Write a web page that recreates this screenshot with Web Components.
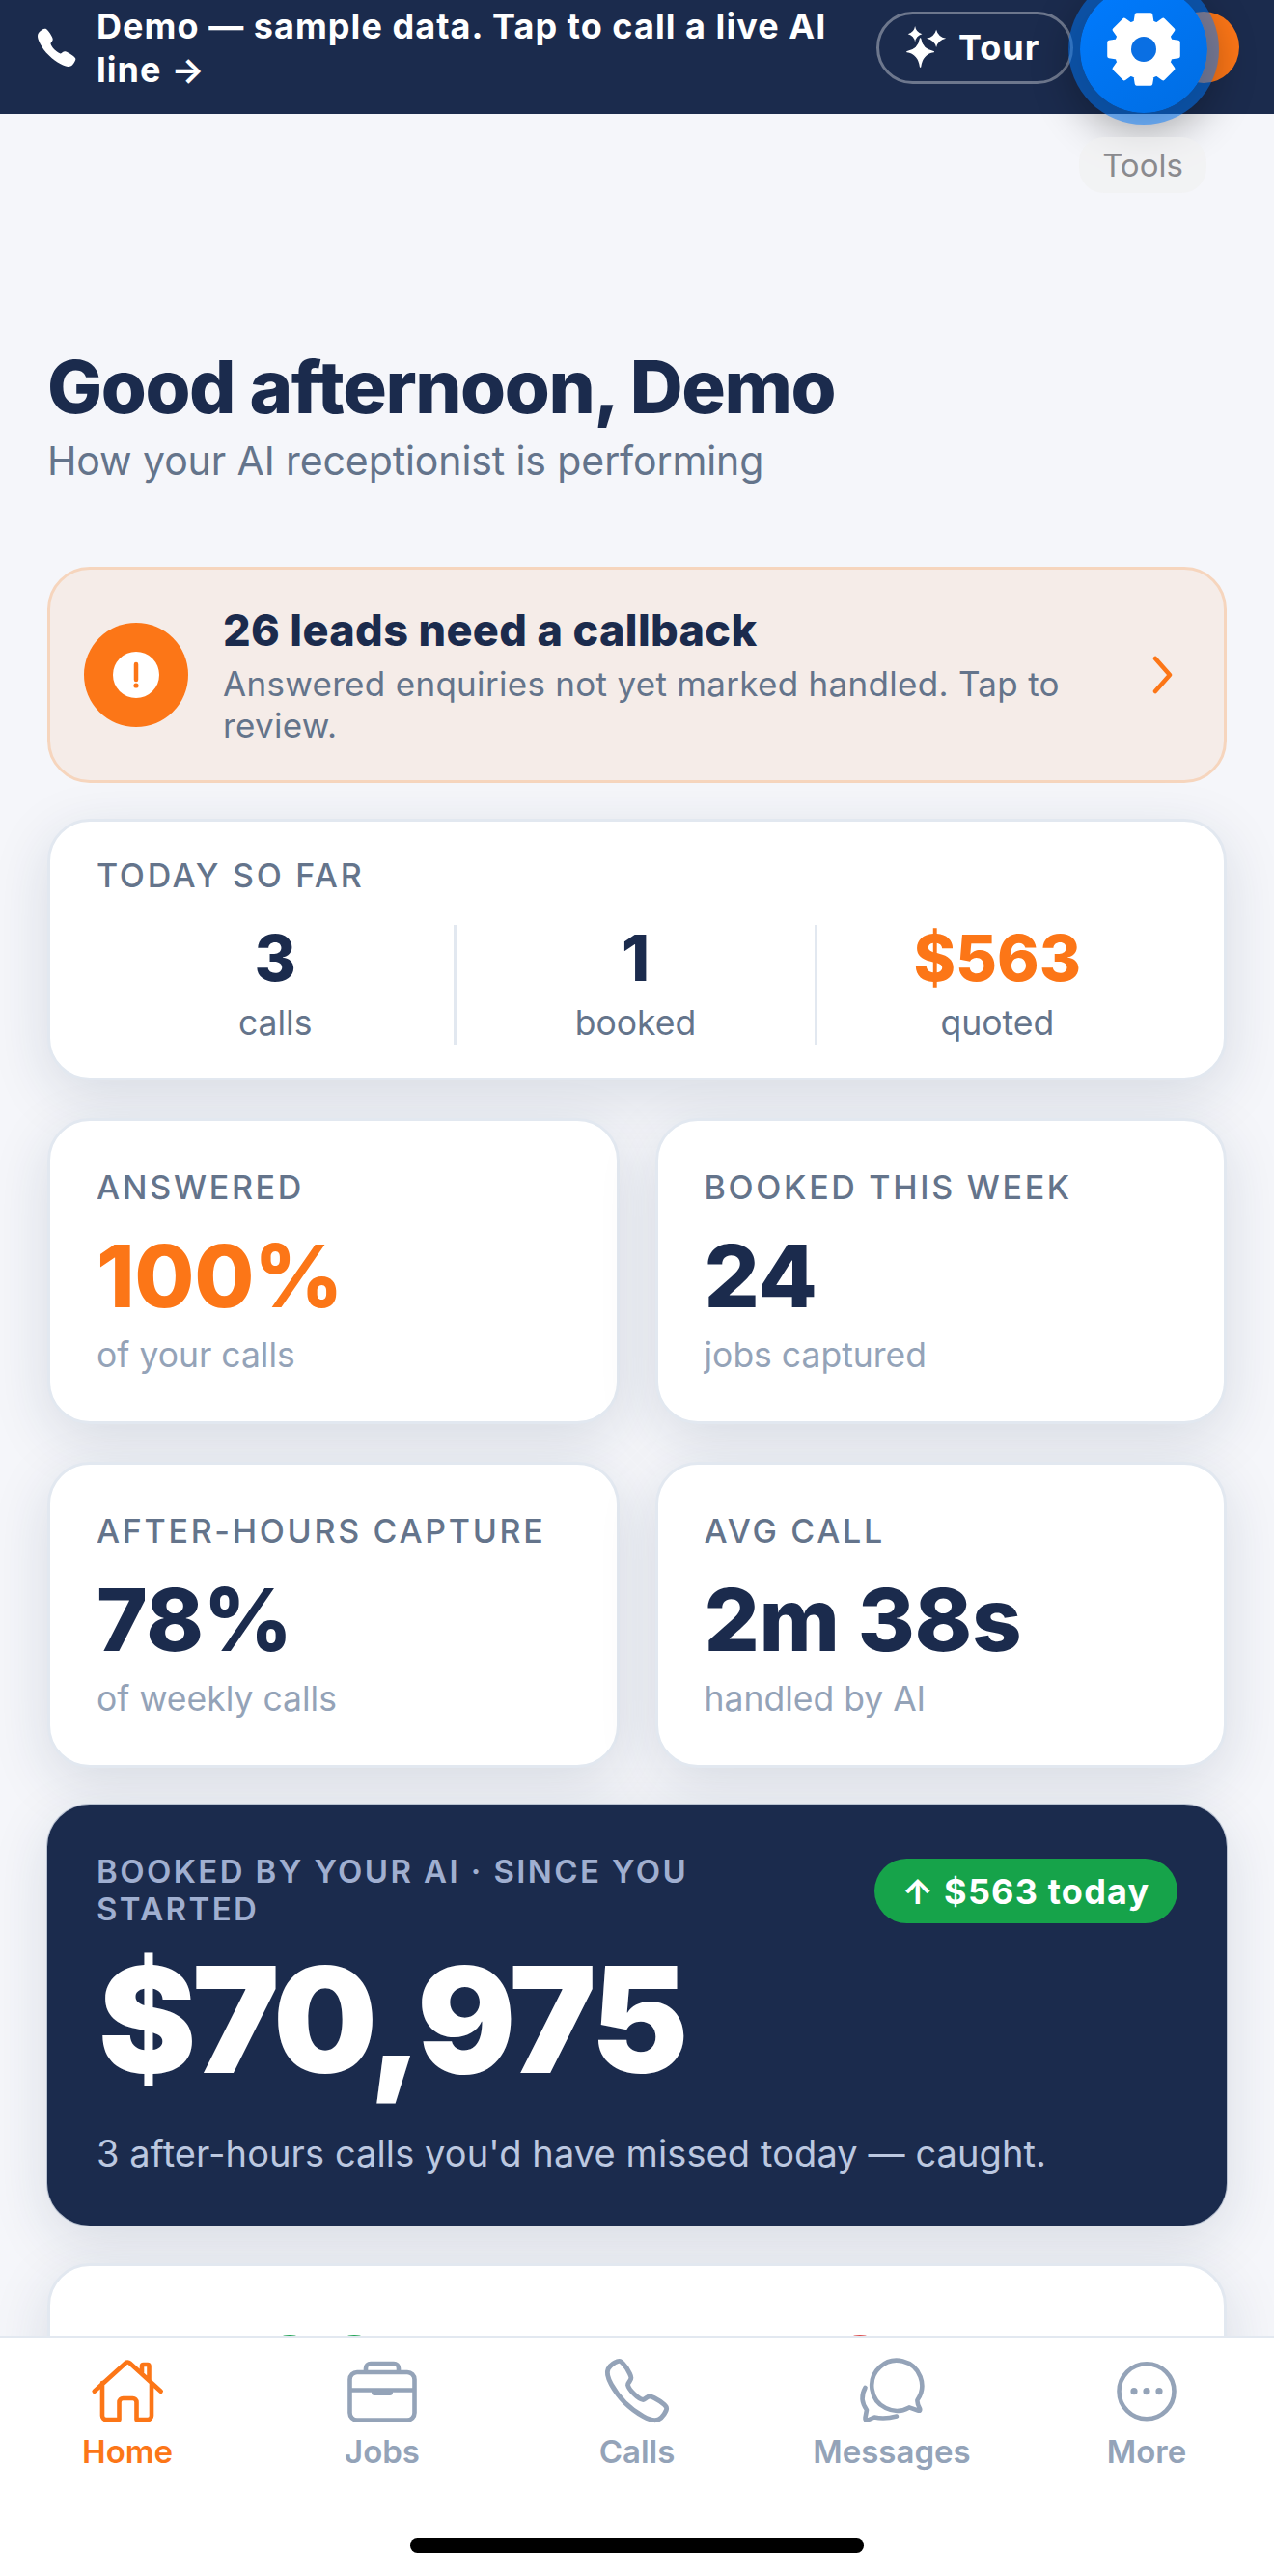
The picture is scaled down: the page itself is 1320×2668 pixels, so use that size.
<!DOCTYPE html>
<html lang="en">
<head>
<meta charset="UTF-8">
<title>Dashboard</title>
<style>
  html, body { margin: 0; padding: 0; }
  body { font-family: Inter, "Liberation Sans", sans-serif; background: #f5f6fa; font-optical-sizing: none; }
</style>
</head>
<body>
<app-shell>
  <demo-banner slot="banner">Demo — sample data. Tap to call a live AI line →</demo-banner>
  <greeting-head title-text="Good afternoon, Demo">How your AI receptionist is performing</greeting-head>
  <alert-card title-text="26 leads need a callback">Answered enquiries not yet marked handled. Tap to review.</alert-card>
  <today-card></today-card>
  <stat-grid>
    <stat-tile label="ANSWERED" value="100%" sub="of your calls" accent></stat-tile>
    <stat-tile label="BOOKED THIS WEEK" value="24" sub="jobs captured"></stat-tile>
    <stat-tile label="AFTER-HOURS CAPTURE" value="78%" sub="of weekly calls"></stat-tile>
    <stat-tile label="AVG CALL" value="2m 38s" sub="handled by AI"></stat-tile>
  </stat-grid>
  <revenue-card></revenue-card>
  <peek-card></peek-card>
  <tab-bar slot="nav"></tab-bar>
  <tools-fab slot="overlay"></tools-fab>
</app-shell>

<script>
  const PHONE = 'M391 480c-19.52 0-46.94-7.06-88-30-49.93-28-88.55-53.85-138.21-103.38C116.91 298.77 93.61 267.79 61 208.45c-36.84-67-30.56-102.12-23.54-117.13C45.82 73.38 58.35 62.65 74.55 51.83A176.3 176.3 0 01103.2 36.64c1-.43 1.93-.84 2.76-1.21 4.95-2.23 12.45-5.6 21.95-2 6.34 2.38 12 7.25 20.86 16 18.17 17.92 43 57.83 52.16 77.43 6.15 13.21 10.22 21.93 10.23 31.71 0 11.45-5.76 20.28-12.75 29.81-1.31 1.79-2.61 3.5-3.87 5.16-7.61 10-9.28 12.89-8.18 18.05 2.23 10.37 18.86 41.24 46.19 68.51s57.31 42.85 67.72 45.07c5.38 1.15 8.33-.59 18.65-8.47 1.48-1.13 3-2.3 4.59-3.47 10.66-7.93 19.08-13.54 30.26-13.54h.06c9.73 0 18.06 4.22 31.86 11.18 18 9.08 59.11 33.59 77.14 51.78 8.77 8.84 13.66 14.48 16.05 20.81 3.6 9.53.21 17-2 22-.37.83-.78 1.74-1.21 2.75a176.49 176.49 0 01-15.29 28.58c-10.8 16.14-21.58 28.64-39.56 37-9.23 4.37-20.33 6.56-30.99 6.56z';

  // every card shares this box
  const CARD_CSS = `
    box-sizing: border-box;
    display: block;
    background: #fff;
    border: 3px solid #e2e8f0;
    border-radius: 44px;
    box-shadow: 0 16px 60px rgba(27, 43, 77, .13);
  `;

  class Base extends HTMLElement {
    render(html) {
      this.attachShadow({ mode: 'open' }).innerHTML = html;
    }
  }

  customElements.define('app-shell', class extends Base {
    constructor() {
      super();
      this.render(`
        <style>
          :host { display: flex; flex-direction: column; position: relative; height: 2668px; overflow: hidden; background: #f5f6fa; }
          main { flex: 1; min-height: 0; overflow: hidden; display: flex; flex-direction: column; gap: 39px; padding: 240px 49px 0; }
        </style>
        <slot name="banner"></slot>
        <main><slot></slot></main>
        <slot name="nav"></slot>
        <slot name="overlay"></slot>
      `);
    }
  });

  customElements.define('demo-banner', class extends Base {
    constructor() {
      super();
      this.render(`
        <style>
          :host { display: flex; flex: none; align-items: center; box-sizing: border-box; height: 118px; padding: 0 36px 20px 39px; background: #1b2b4d; color: #fff; }
          .ph { flex: none; width: 40px; height: 40px; margin-right: 21px; }
          .txt { flex: 1; font-size: 36px; font-weight: 700; letter-spacing: 1.05px; line-height: 45px; padding-top: 2px; }
          .tour { flex: none; box-sizing: border-box; width: 204px; height: 75px; border: 3px solid rgba(255,255,255,.36); border-radius: 38px; display: flex; align-items: center; padding-left: 27px; font-size: 36px; font-weight: 700; letter-spacing: 1px; }
          .tour svg { width: 44px; height: 44px; margin-right: 11px; flex: none; }
          .avatar { flex: none; width: 74px; height: 74px; border-radius: 50%; background: #fc7617; margin-left: 98px; }
        </style>
        <svg class="ph" viewBox="32 24 456 456" fill="#fff"><path d="${PHONE}"/></svg>
        <div class="txt"><slot></slot></div>
        <div class="tour">
          <svg viewBox="0 0 48 48" fill="#fff">
            <path d="M17 14 Q19 27 32 29 Q19 31 17 46 Q15 31 2 29 Q15 27 17 14Z" stroke="#fff" stroke-width="1.5" stroke-linejoin="round"/>
            <path d="M11 0 Q12 7 19 9 Q12 11 11 18 Q10 11 3 9 Q10 7 11 0Z"/>
            <path d="M35 4 Q37 12 46 14 Q37 16 35 24 Q33 16 24 14 Q33 12 35 4Z"/>
          </svg>
          Tour
        </div>
        <div class="avatar"></div>
      `);
    }
  });

  customElements.define('tools-fab', class extends Base {
    constructor() {
      super();
      // 8 tooth gear, worked out from polar points
      let d = '';
      for (let i = 0; i < 8; i++) {
        const a = i * Math.PI / 4 - Math.PI / 2;
        const pts = [[29, -.3], [36.5, -.2], [36.5, .2], [29, .3]];
        pts.forEach(([r, o]) => {
          const x = 40 + r * Math.cos(a + o);
          const y = 40 + r * Math.sin(a + o);
          d += (d ? 'L' : 'M') + x.toFixed(2) + ' ' + y.toFixed(2);
        });
      }
      this.render(`
        <style>
          :host { display: block; position: absolute; left: 1119px; top: -15px; width: 132px; height: 215px; }
          .btn { width: 132px; height: 132px; border-radius: 50%; display: flex; align-items: center; justify-content: center;
                 background: linear-gradient(145deg, #007bff, #006de2);
                 box-shadow: 0 0 0 12px rgba(0,122,255,.5), 0 14px 44px 8px rgba(0,0,0,.3); }
          .btn svg { width: 80px; height: 80px; }
          .tip { position: absolute; left: -1px; top: 157px; width: 132px; height: 58px; border-radius: 26px; background: rgba(240,240,240,.62);
                 display: flex; align-items: center; justify-content: center; font-size: 33px; color: #8a8a8e; }
        </style>
        <div class="btn">
          <svg viewBox="0 0 80 80">
            <path d="${d}Z" fill="#fff" stroke="#fff" stroke-width="4" stroke-linejoin="round"/>
            <circle cx="40" cy="40" r="13" fill="#0a6fe3"/>
          </svg>
        </div>
        <div class="tip">Tools</div>
      `);
    }
  });

  customElements.define('greeting-head', class extends Base {
    constructor() {
      super();
      this.render(`
        <style>
          :host { display: block; flex: none; margin-bottom: 45px; }
          h1 { margin: 0 0 9px; font-size: 76px; line-height: 84px; font-weight: 800; letter-spacing: -1.4px; color: #1b2b4d; }
          p { margin: 0; font-size: 41px; line-height: 52px; letter-spacing: -.1px; color: #64748b; }
        </style>
        <h1>${this.getAttribute('title-text')}</h1>
        <p><slot></slot></p>
      `);
    }
  });

  customElements.define('alert-card', class extends Base {
    constructor() {
      super();
      this.render(`
        <style>
          :host { display: flex; flex: none; align-items: center; box-sizing: border-box; padding: 34px 34px 34px 35px; height: 224px; margin-bottom: -2px;
                  background: #f5ece8; border: 3px solid #f6d5bd; border-radius: 44px; }
          .ic { flex: none; width: 108px; height: 108px; border-radius: 50%; background: #fc7617; display: flex; align-items: center; justify-content: center; margin-right: 36px; }
          .ic svg { width: 48px; height: 48px; }
          .body { flex: 1; }
          .t { font-size: 45px; line-height: 56px; font-weight: 800; letter-spacing: .35px; color: #1b2b4d; }
          .d { margin-top: 6px; font-size: 35px; line-height: 43px; letter-spacing: .3px; color: #64748b; }
          .ch { flex: none; width: 28px; height: 40px; margin-left: 49px; margin-right: 16px; }
        </style>
        <div class="ic">
          <svg viewBox="0 0 48 48">
            <circle cx="24" cy="24" r="24" fill="#fff"/>
            <path d="M24 13V29" stroke="#fc7617" stroke-width="4.5" stroke-linecap="round"/>
            <circle cx="24" cy="35" r="2.6" fill="#fc7617"/>
          </svg>
        </div>
        <div class="body">
          <div class="t">${this.getAttribute('title-text')}</div>
          <div class="d"><slot></slot></div>
        </div>
        <svg class="ch" viewBox="0 0 28 40" fill="none" stroke="#fc7617" stroke-width="4.5" stroke-linecap="round" stroke-linejoin="round"><path d="M7 3L22 20L7 37"/></svg>
      `);
    }
  });

  customElements.define('today-card', class extends Base {
    constructor() {
      super();
      const cells = [['3', 'calls', ''], ['1', 'booked', ''], ['$563', 'quoted', 'o']];
      this.render(`
        <style>
          :host { ${CARD_CSS} flex: none; padding: 35px 48px 42px; height: 271px; }
          .lb { font-size: 34px; line-height: 42px; font-weight: 500; letter-spacing: 2.7px; color: #64748b; }
          .row { display: grid; grid-template-columns: repeat(3, 1fr); margin-top: 30px; height: 115px; }
          .cell { text-align: center; border-right: 3px solid #e2e8f0; }
          .cell:last-child { border-right: 0; }
          .n { font-size: 66px; line-height: 68px; font-weight: 800; color: #1b2b4d; }
          .n.o { color: #fc7617; }
          .s { margin-top: 12px; font-size: 35.5px; line-height: 44px; color: #64748b; }
        </style>
        <div class="lb">TODAY SO FAR</div>
        <div class="row">
          ${cells.map(c => `<div class="cell"><div class="n ${c[2]}">${c[0]}</div><div class="s">${c[1]}</div></div>`).join('')}
        </div>
      `);
    }
  });

  customElements.define('stat-grid', class extends Base {
    constructor() {
      super();
      this.render(`
        <style>:host { display: grid; flex: none; grid-template-columns: 1fr 1fr; column-gap: 37px; row-gap: 39px; margin-bottom: -1px; }</style>
        <slot></slot>
      `);
    }
  });

  customElements.define('stat-tile', class extends Base {
    constructor() {
      super();
      this.render(`
        <style>
          :host { ${CARD_CSS} padding: 48px 48px 0; height: 317px; }
          .lb { font-size: 34px; line-height: 42px; font-weight: 500; letter-spacing: 2.7px; color: #64748b; white-space: nowrap; }
          .v { margin-top: 25px; font-size: 90px; line-height: 92px; font-weight: 800; letter-spacing: -.4px; color: #1b2b4d; white-space: nowrap; }
          :host([accent]) .v { color: #fc7617; }
          .s { margin-top: 14px; font-size: 35.5px; line-height: 44px; color: #94a3b8; }
        </style>
        <div class="lb">${this.getAttribute('label')}</div>
        <div class="v">${this.getAttribute('value')}</div>
        <div class="s">${this.getAttribute('sub')}</div>
      `);
    }
  });

  customElements.define('revenue-card', class extends Base {
    constructor() {
      super();
      this.render(`
        <style>
          :host { display: block; flex: none; box-sizing: border-box; height: 436px; padding: 48px 49px 0; background: #1b2b4d; border: 2px solid #1b2b4d; border-radius: 44px;
                  box-shadow: 0 0 0 1px rgba(148,163,184,.55), 0 16px 60px rgba(27,43,77,.13); color: #fff; }
          .top { display: flex; justify-content: space-between; align-items: flex-start; }
          .lb { width: 660px; font-size: 33px; line-height: 39px; font-weight: 600; letter-spacing: 2.4px; color: #a0afd0; }
          .badge { flex: none; box-sizing: border-box; width: 314px; height: 67px; margin-top: 6px; border-radius: 34px; background: #16a34a; display: flex; align-items: center; justify-content: center; font-size: 36px; font-weight: 700; letter-spacing: 1.2px; white-space: pre; }
          .v { margin-top: 15px; margin-left: 2px; font-size: 152px; line-height: 160px; font-weight: 900; letter-spacing: -4.1px; }
          .s { margin-top: 36px; font-size: 38px; line-height: 44px; letter-spacing: .1px; color: #bcc8e0; white-space: nowrap; }
        </style>
        <div class="top">
          <div class="lb">BOOKED BY YOUR AI · SINCE YOU STARTED</div>
          <div class="badge">↑ $563 today</div>
        </div>
        <div class="v">$70,975</div>
        <div class="s">3 after-hours calls you'd have missed today — caught.</div>
      `);
    }
  });

  // only the very top of the next card shows above the tab bar
  customElements.define('peek-card', class extends Base {
    constructor() {
      super();
      this.render(`
        <style>
          :host { ${CARD_CSS} flex: none; height: 220px; padding-top: 69px; }
          svg { display: block; width: 100%; height: 4px; }
        </style>
        <svg viewBox="52 0 1216 4" preserveAspectRatio="none">
          <ellipse cx="300" cy="4" rx="8" ry="2" fill="#22a355"/>
          <ellipse cx="367" cy="4" rx="8" ry="2" fill="#22a355"/>
          <ellipse cx="420" cy="4" rx="2" ry="1" fill="#9fd4b4"/>
          <ellipse cx="891" cy="4" rx="8" ry="2" fill="#dc4a4a"/>
        </svg>
      `);
    }
  });

  customElements.define('tab-bar', class extends Base {
    constructor() {
      super();
      const tabs = [
        ['Home', '32 36 80 70', `<path d="M37.7 71.7L70 42.5a3.4 3.4 0 0 1 4.6 0L106.7 71.7M46 63V97a4 4 0 0 0 4 4H63.5V83a4 4 0 0 1 4-4H77.5a4 4 0 0 1 4 4V101H93a4 4 0 0 0 4-4V63M87 52V45.5a1.5 1.5 0 0 1 1.5-1.5H93a1.5 1.5 0 0 1 1.5 1.5V60"/>`],
        ['Jobs', '297 36 80 70', `<path d="M311 52H363a7.5 7.5 0 0 1 7.5 7.5V94a7.5 7.5 0 0 1-7.5 7.5H311a7.5 7.5 0 0 1-7.5-7.5V59.5A7.5 7.5 0 0 1 311 52ZM320 52V48a5 5 0 0 1 5-5H349a5 5 0 0 1 5 5V52M303.5 70.5H370.5"/><path d="M326 71H348V73a3 3 0 0 1-3 3H329a3 3 0 0 1-3-3Z" fill="currentColor" stroke="none"/>`],
        ['Calls', '0 0 512 512', `<path d="${PHONE}" stroke-width="36"/>`],
        ['Messages', '24 36 80 70', `<path d="M82 88.4A26 26 0 1 1 90.5 80.7Q90 84 93 89.5Q94 92.5 91 91.5L82 88.4Z"/><path d="M36.5 68C32 76 33 84 38 91L36.5 99Q36 102.5 39 101.5L46 98.5C52 100 60 100 69 97.5"/>`],
        ['More', '288 36 80 70', `<circle cx="328" cy="71.7" r="28.5"/><g fill="currentColor" stroke="none"><circle cx="315" cy="71.7" r="3.6"/><circle cx="328" cy="71.7" r="3.6"/><circle cx="341" cy="71.7" r="3.6"/></g>`]
      ];
      this.render(`
        <style>
          :host { display: flex; flex: none; flex-direction: column; box-sizing: border-box; height: 249px; background: #fff; border-top: 2px solid #e2e8f0; padding-top: 20px; position: relative; }
          .tabs { display: grid; grid-template-columns: repeat(5, 1fr); }
          .tab { display: flex; flex-direction: column; align-items: center; color: #94a3b8; font-size: 33px; line-height: 40px; font-weight: 600; }
          .tab.on { color: #fc7617; }
          .tab svg { width: 80px; height: 70px; margin-bottom: 8px; display: block; fill: none; stroke: currentColor; stroke-width: 4.6; stroke-linecap: round; stroke-linejoin: round; }
          .home { margin: auto auto 24px; width: 470px; height: 15px; border-radius: 8px; background: #000; }
        </style>
        <div class="tabs">
          ${tabs.map((t, i) => `<div class="tab ${i === 0 ? 'on' : ''}"><svg viewBox="${t[1]}">${t[2]}</svg>${t[0]}</div>`).join('')}
        </div>
        <div class="home"></div>
      `);
    }
  });
</script>
</body>
</html>
